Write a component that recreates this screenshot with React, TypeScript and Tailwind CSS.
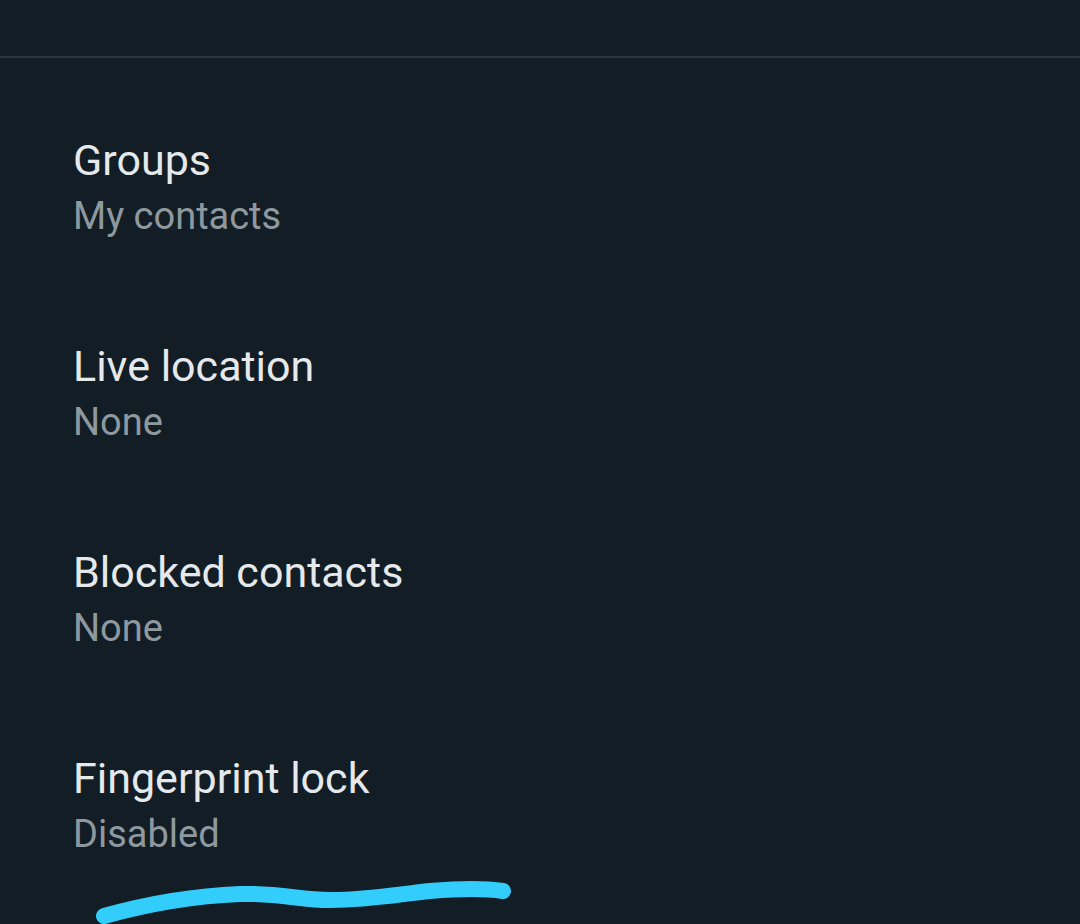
import React from "react";

const items = [
  { t: "Groups", s: "My contacts" },
  { t: "Live location", s: "None" },
  { t: "Blocked contacts", s: "None" },
  { t: "Fingerprint lock", s: "Disabled" },
];

export default function App() {
  return (
    <div
      className="relative w-[1080px] h-[924px] overflow-hidden bg-[#121d25]"
      style={{ fontFamily: "Roboto, 'Noto Sans', sans-serif" }}
    >
      <div className="h-[56px]" />
      <div className="h-[2px] bg-[#2a353d]" />
      <div className="flex flex-col pl-[73px] pt-[78px] gap-[108px]">
        {items.map((it) => (
          <div key={it.t} className="flex flex-col h-[98px]">
            <div className="text-[43px] leading-[48px] text-[#e5e9eb]">{it.t}</div>
            <div className="text-[38px] leading-[48px] mt-[8px] text-[#8e999f]">{it.s}</div>
          </div>
        ))}
      </div>
      <svg className="absolute left-0 top-0" width="1080" height="924" viewBox="0 0 1080 924">
        <path
          d="M104 916 C 140 906, 190 896, 240 894 C 280 893, 300 900, 330 900 C 370 900, 400 894, 430 891 C 465 888, 490 889, 503 891"
          fill="none"
          stroke="#33cdfb"
          strokeWidth="16"
          strokeLinecap="round"
        />
      </svg>
    </div>
  );
}
